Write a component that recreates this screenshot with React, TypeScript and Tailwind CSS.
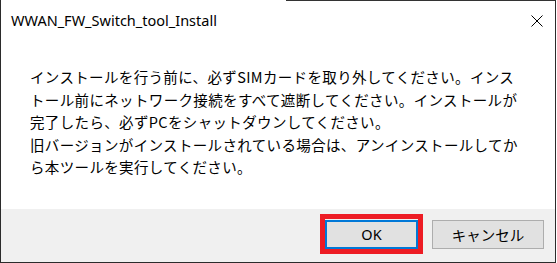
import React from "react";

export default function App() {
  const jp = { fontFamily: '"Noto Sans CJK JP", "Noto Sans", sans-serif' };
  const ui = { fontFamily: '"Noto Sans", "Noto Sans CJK JP", sans-serif' };
  return (
    <div className="w-[557px] h-[263px] bg-white flex">
      <div className="w-[556px] h-[263px] flex flex-col border-l border-r border-b border-[#2b2b2b]">
        <div className="flex h-px">
          <div className="w-[285px] bg-white" />
          <div className="flex-1 bg-[#333333]" />
        </div>
        <div className="h-[40px] flex items-center justify-between pl-[10px] pr-[12px] bg-white">
          <span className="text-[14.5px] text-black" style={ui}>WWAN_FW_Switch_tool_Install</span>
          <svg width="12" height="12" viewBox="0 0 12 12" className="mt-[-1px]">
            <path d="M0.5 0.5 L11.5 11.5 M11.5 0.5 L0.5 11.5" stroke="#000" strokeWidth="1" fill="none" />
          </svg>
        </div>
        <div className="h-[168px] bg-white pl-[29px] pt-[25px]">
          <p className="text-[14.5px] leading-[22.5px] text-black whitespace-nowrap tracking-[0.35px]" style={jp}>
            インストールを行う前に、必ずSIMカードを取り外してください。インス<br />
            トール前にネットワーク接続をすべて遮断してください。インストールが<br />
            完了したら、必ずPCをシャットダウンしてください。<br />
            旧バージョンがインストールされている場合は、アンインストールしてか<br />
            ら本ツールを実行してください。
          </p>
        </div>
        <div className="flex-1 bg-[#f0f0f0] flex justify-end items-start pt-[11px] pr-[11px] gap-[14px]">
          <div className="relative">
            <button className="w-[93px] h-[29px] border-2 border-[#0078d7] bg-[#e1e1e1] text-[14.5px] text-black flex items-center justify-center" style={ui}>
              OK
            </button>
            <div className="absolute top-[-6px] bottom-[-5px] left-[-5px] right-[-5px] border-[5px] border-[#ed1c24]" />
          </div>
          <button className="w-[112px] h-[29px] border border-[#adadad] bg-[#e1e1e1] text-[14.5px] text-black flex items-center justify-center" style={jp}>
            キャンセル
          </button>
        </div>
      </div>
    </div>
  );
}
